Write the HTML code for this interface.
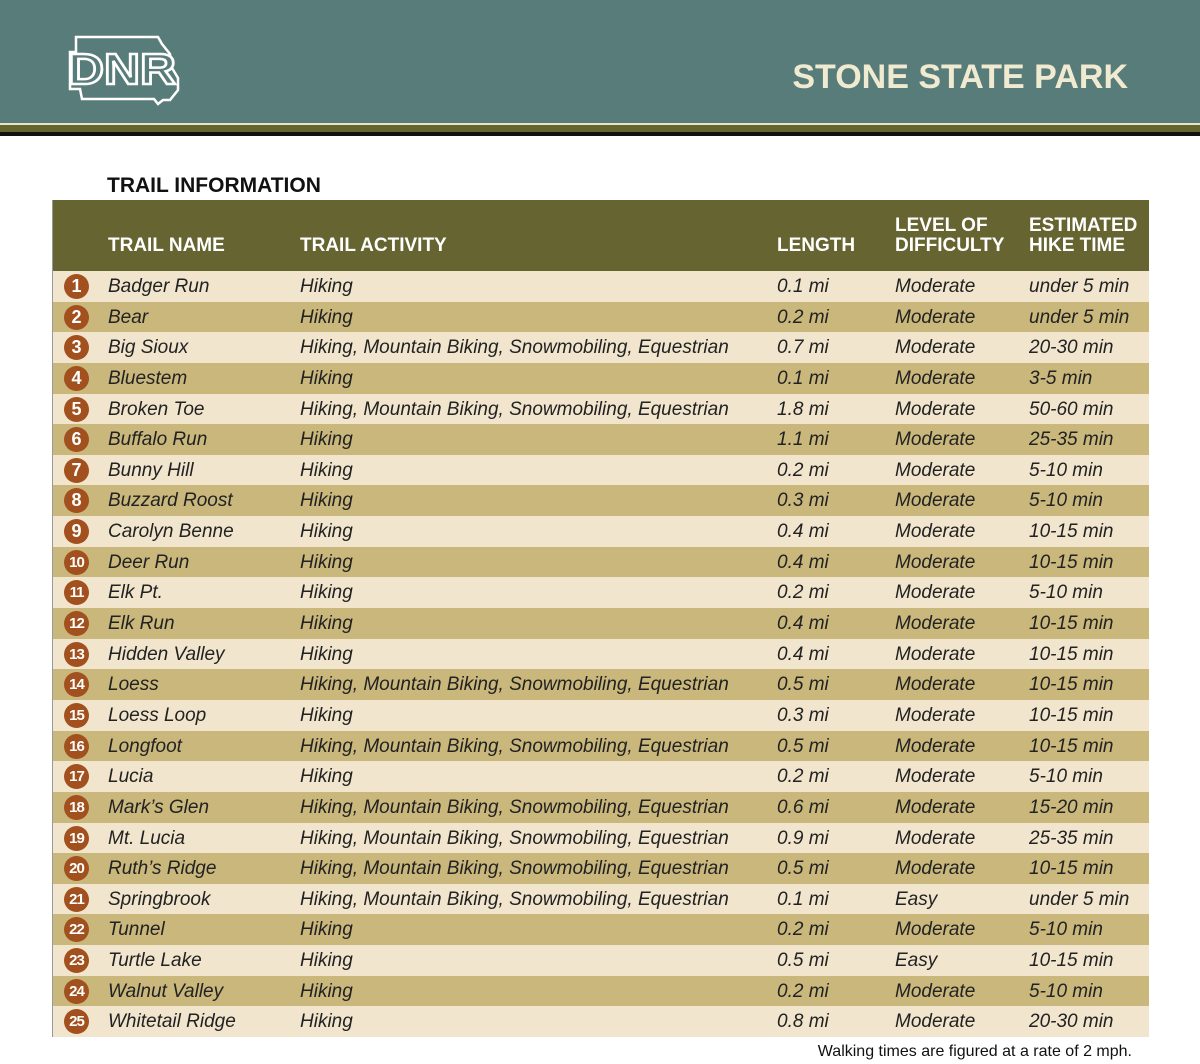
<!DOCTYPE html>
<html><head><meta charset="utf-8"><style>
body{margin:0;width:1200px;height:1064px;background:#fff;font-family:"Liberation Sans",sans-serif;position:relative;overflow:hidden}
.hdr{position:absolute;left:0;top:0;width:1200px;height:123px;background:#587c79}
.l1{position:absolute;left:0;top:123px;width:1200px;height:2px;background:#e8e6c0}
.l2{position:absolute;left:0;top:125px;width:1200px;height:7px;background:#656530}
.l3{position:absolute;left:0;top:132px;width:1200px;height:4px;background:#111}
.title{position:absolute;right:72px;top:58px;color:#f0ead0;font-weight:bold;font-size:34px;letter-spacing:0px}
.ti{position:absolute;left:107px;top:174px;font-weight:bold;font-size:21px;color:#111}
.tbl{position:absolute;left:52px;top:200px;width:1095px;height:836px;border:1px solid #999;border-top:none;box-sizing:content-box}
.th{position:absolute;left:0;top:0;width:1096px;height:71px;background:#666532;color:#fff;font-weight:bold;font-size:19px}
.th div{position:absolute;line-height:20px}
.row{position:absolute;left:0;width:1096px;height:30.64px;font-style:italic;font-size:19px;color:#222}
.row div{position:absolute;top:5px;white-space:nowrap}
.a{background:#f1e5cd}.b{background:#c9b77c}
.n{left:11px!important;top:3px!important;width:25px;height:25px;border-radius:50%;background:#a2501d;color:#fff;font-style:normal;font-weight:bold;font-size:18px;text-align:center;line-height:25px}
.n.s{font-size:15px;letter-spacing:-1px}
.foot{position:absolute;right:68px;top:1043px;font-size:16px;color:#111}
</style></head><body>
<div class="hdr"></div><div class="l1"></div><div class="l2"></div><div class="l3"></div>
<svg style="position:absolute;left:66px;top:32px" width="120" height="74" viewBox="0 0 120 74" fill="none" stroke="#fff" stroke-width="2.5">
<path d="M10 5 H92 L96 12 L104 22 L106 36 L112 46 L112 58 L104 68 H97 L92 72 L88 67 H16 L14 57 H4 V20 H10 Z"/>
<text x="2" y="52" font-family="Liberation Sans" font-weight="bold" font-size="44" fill="#587c79" stroke="#fff" stroke-width="2.5" textLength="108" lengthAdjust="spacingAndGlyphs">DNR</text>
</svg>
<div class="title">STONE STATE PARK</div>
<div class="ti">TRAIL INFORMATION</div>
<div class="tbl">
<div class="th">
<div style="left:55px;top:36px">TRAIL NAME</div>
<div style="left:247px;top:36px">TRAIL ACTIVITY</div>
<div style="left:724px;top:36px">LENGTH</div>
<div style="left:842px;top:16px">LEVEL OF<br>DIFFICULTY</div>
<div style="left:976px;top:16px">ESTIMATED<br>HIKE TIME</div>
</div>
<div id="rows"></div>
</div>
<div class="foot">Walking times are figured at a rate of 2 mph.</div>
<script>
var H="Hiking",M="Hiking, Mountain Biking, Snowmobiling, Equestrian";
var d=[["Badger Run",H,"0.1 mi","Moderate","under 5 min"],["Bear",H,"0.2 mi","Moderate","under 5 min"],["Big Sioux",M,"0.7 mi","Moderate","20-30 min"],["Bluestem",H,"0.1 mi","Moderate","3-5 min"],["Broken Toe",M,"1.8 mi","Moderate","50-60 min"],["Buffalo Run",H,"1.1 mi","Moderate","25-35 min"],["Bunny Hill",H,"0.2 mi","Moderate","5-10 min"],["Buzzard Roost",H,"0.3 mi","Moderate","5-10 min"],["Carolyn Benne",H,"0.4 mi","Moderate","10-15 min"],["Deer Run",H,"0.4 mi","Moderate","10-15 min"],["Elk Pt.",H,"0.2 mi","Moderate","5-10 min"],["Elk Run",H,"0.4 mi","Moderate","10-15 min"],["Hidden Valley",H,"0.4 mi","Moderate","10-15 min"],["Loess",M,"0.5 mi","Moderate","10-15 min"],["Loess Loop",H,"0.3 mi","Moderate","10-15 min"],["Longfoot",M,"0.5 mi","Moderate","10-15 min"],["Lucia",H,"0.2 mi","Moderate","5-10 min"],["Mark’s Glen",M,"0.6 mi","Moderate","15-20 min"],["Mt. Lucia",M,"0.9 mi","Moderate","25-35 min"],["Ruth’s Ridge",M,"0.5 mi","Moderate","10-15 min"],["Springbrook",M,"0.1 mi","Easy","under 5 min"],["Tunnel",H,"0.2 mi","Moderate","5-10 min"],["Turtle Lake",H,"0.5 mi","Easy","10-15 min"],["Walnut Valley",H,"0.2 mi","Moderate","5-10 min"],["Whitetail Ridge",H,"0.8 mi","Moderate","20-30 min"]];
var h="";d.forEach(function(r,i){h+='<div class="row '+(i%2?'b':'a')+'" style="top:'+(71+i*30.64)+'px"><div class="n'+(i>=9?' s':'')+'">'+(i+1)+'</div><div style="left:55px">'+r[0]+'</div><div style="left:247px">'+r[1]+'</div><div style="left:724px">'+r[2]+'</div><div style="left:842px">'+r[3]+'</div><div style="left:976px">'+r[4]+'</div></div>';});
document.getElementById("rows").innerHTML=h;
</script>
</body></html>
